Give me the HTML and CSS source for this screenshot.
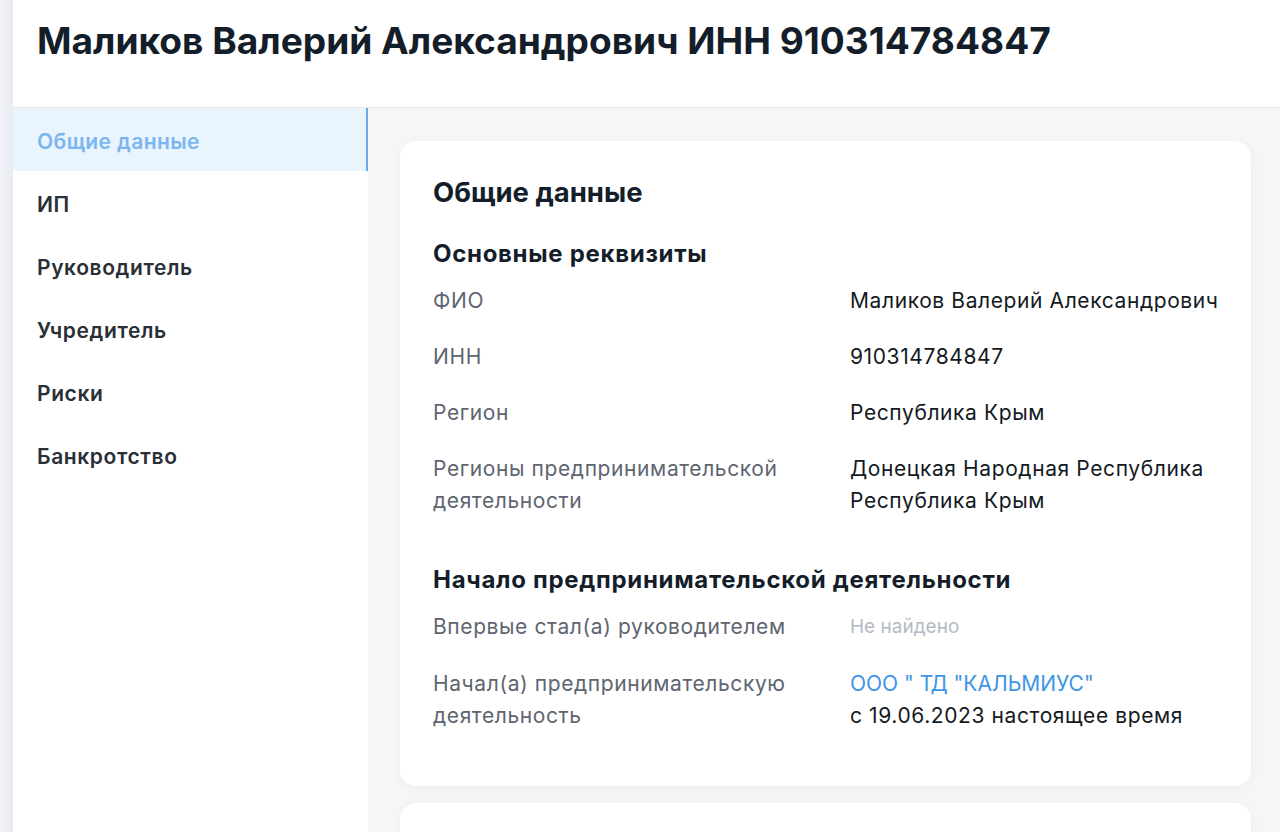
FILE: index.html
```html
<!DOCTYPE html>
<html lang="ru">
<head>
<meta charset="utf-8">
<title>Маликов Валерий Александрович</title>
<link rel="stylesheet" href="styles.css">
</head>
<body>
<div class="app">
  <div class="shell">
    <header class="header">
      <h1 class="title">Маликов Валерий Александрович ИНН 910314784847</h1>
    </header>
    <div class="body">
      <nav class="sidebar">
        <a class="nav-item active">Общие данные</a>
        <a class="nav-item">ИП</a>
        <a class="nav-item">Руководитель</a>
        <a class="nav-item">Учредитель</a>
        <a class="nav-item">Риски</a>
        <a class="nav-item">Банкротство</a>
      </nav>
      <main class="main">
        <section class="card">
          <h2 class="card-title">Общие данные</h2>
          <h3 class="section-title">Основные реквизиты</h3>
          <dl class="rows">
            <div class="row"><dt>ФИО</dt><dd>Маликов Валерий Александрович</dd></div>
            <div class="row"><dt>ИНН</dt><dd>910314784847</dd></div>
            <div class="row"><dt>Регион</dt><dd>Республика Крым</dd></div>
            <div class="row"><dt>Регионы предпринимательской деятельности</dt><dd>Донецкая Народная Республика<br>Республика Крым</dd></div>
          </dl>
          <h3 class="section-title second">Начало предпринимательской деятельности</h3>
          <dl class="rows rows-wide">
            <div class="row"><dt>Впервые стал(а) руководителем</dt><dd class="muted">Не найдено</dd></div>
            <div class="row"><dt>Начал(а) предпринимательскую деятельность</dt><dd><a class="link">ООО " ТД "КАЛЬМИУС"</a><br>с 19.06.2023 настоящее время</dd></div>
          </dl>
        </section>
        <section class="card card-next"></section>
      </main>
    </div>
  </div>
</div>
</body>
</html>
```
FILE: styles.css
```css
* { box-sizing: border-box; }
html, body { margin: 0; height: 100%; }
body {
  font-family: Inter, "Noto Sans", sans-serif;
  background: #eef0f5;
  color: #16202c;
  overflow: hidden;
}
.app {
  height: 832px;
  padding-left: 13px;
  background: linear-gradient(90deg, #f2f3f8 0, #e9ebf2 13px);
}
.shell {
  height: 100%;
  background: #fff;
  display: flex;
  flex-direction: column;
}
.header {
  height: 108px;
  padding: 0 24px;
  border-bottom: 1px solid #e6e8eb;
  display: flex;
  align-items: flex-start;
}
.title {
  margin: 19px 0 0;
  font-size: 37.1px;
  font-weight: 700;
  color: #141e2a;
  line-height: 44px;
}
.body {
  flex: 1;
  display: flex;
  min-height: 0;
}
.sidebar {
  width: 355px;
  flex-shrink: 0;
  background: #fff;
  display: flex;
  flex-direction: column;
}
.nav-item {
  height: 63px;
  display: flex;
  align-items: center;
  padding: 3px 0 0 24px;
  font-size: 21px;
  font-weight: 600;
  letter-spacing: 0.6px;
  color: #2a2f36;
  text-decoration: none;
}
.nav-item.active {
  background: #eaf4fd;
  color: #7ab6f1;
  border-right: 2px solid #6ea7e8;
  letter-spacing: 0.4px;
}
.main {
  flex: 1;
  background: #f5f6f7;
  padding: 33px 29px 0 32px;
  display: flex;
  flex-direction: column;
  gap: 17px;
  overflow: hidden;
}
.card {
  background: #fff;
  border-radius: 16px;
  padding: 31px 33px 54px;
  box-shadow: 0 2px 12px rgba(20, 30, 50, 0.04);
  flex-shrink: 0;
}
.card-next { flex: 1 0 60px; border-bottom-left-radius: 0; border-bottom-right-radius: 0; padding: 0; }
.card-title {
  margin: 0;
  font-size: 27.5px;
  font-weight: 700;
  line-height: 40px;
  color: #141e2a;
}
.section-title {
  margin: 26px 0 0;
  font-size: 24px;
  font-weight: 700;
  letter-spacing: 0.7px;
  line-height: 32px;
  color: #141e2a;
}
.section-title.second { margin-top: 47px; }
.rows { margin: 11px 0 0; }
.row {
  display: grid;
  grid-template-columns: 417px 1fr;
  padding: 4px 0 20px;
}
.rows-wide .row { padding-bottom: 21px; }
.rows .row:last-child { padding-bottom: 0; }
dt {
  font-size: 21px;
  line-height: 32px;
  letter-spacing: 0.6px;
  color: #5e6570;
  padding-right: 30px;
}
dd {
  margin: 0;
  font-size: 21px;
  line-height: 32px;
  letter-spacing: 0.6px;
  color: #141a22;
  white-space: nowrap;
}
dd.muted { color: #b4bac4; font-size: 19px; letter-spacing: 0; }
.link { color: #3e95e6; text-decoration: none; letter-spacing: 0; }
```
